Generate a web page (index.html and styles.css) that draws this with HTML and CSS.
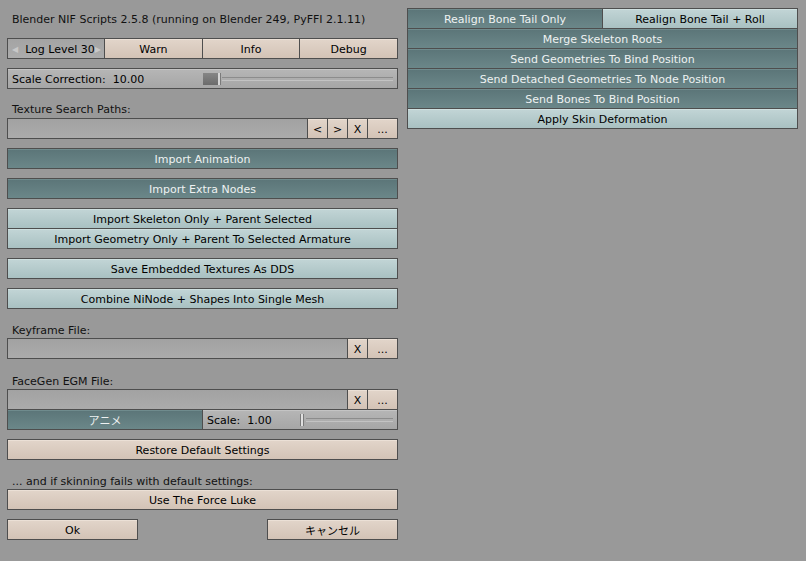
FILE: index.html
```html
<!DOCTYPE html>
<html>
<head>
<meta charset="utf-8">
<link rel="stylesheet" href="styles.css">
</head>
<body>
<div class="page">
  <div class="col left">
    <div class="label title">Blender NIF Scripts 2.5.8 (running on Blender 249, PyFFI 2.1.11)</div>
    <div class="row m12">
      <div class="btn field num"><span class="arr">&#9664;</span><span class="numtext">Log Level 30</span><span class="arr">&#9654;</span></div>
      <div class="btn beige">Warn</div>
      <div class="btn beige">Info</div>
      <div class="btn beige">Debug</div>
    </div>
    <div class="row m9">
      <div class="btn slider">
        <span class="stext">Scale Correction:&nbsp;&nbsp;10.00</span>
        <span class="knob big"></span>
        <span class="track"></span>
      </div>
    </div>
    <div class="label m13">Texture Search Paths:</div>
    <div class="row m2">
      <div class="btn field grow"></div>
      <div class="btn beige sq">&lt;</div>
      <div class="btn beige sq">&gt;</div>
      <div class="btn beige sq">X</div>
      <div class="btn beige dots">...</div>
    </div>
    <div class="row m9"><div class="btn dark grow">Import Animation</div></div>
    <div class="row m9"><div class="btn dark grow">Import Extra Nodes</div></div>
    <div class="row m9"><div class="btn light grow">Import Skeleton Only + Parent Selected</div></div>
    <div class="row mneg"><div class="btn light grow">Import Geometry Only + Parent To Selected Armature</div></div>
    <div class="row m9"><div class="btn light grow">Save Embedded Textures As DDS</div></div>
    <div class="row m9"><div class="btn light grow">Combine NiNode + Shapes Into Single Mesh</div></div>
    <div class="label m14">Keyframe File:</div>
    <div class="row m1">
      <div class="btn field grow"></div>
      <div class="btn beige sq">X</div>
      <div class="btn beige dots">...</div>
    </div>
    <div class="label m15">FaceGen EGM File:</div>
    <div class="row m1">
      <div class="btn field grow"></div>
      <div class="btn beige sq">X</div>
      <div class="btn beige dots">...</div>
    </div>
    <div class="row mneg">
      <div class="btn dark half jp">アニメ</div>
      <div class="btn slider half2">
        <span class="stext">Scale:&nbsp;&nbsp;1.00</span>
        <span class="knob thin"></span>
        <span class="track"></span>
      </div>
    </div>
    <div class="row m9"><div class="btn beige grow">Restore Default Settings</div></div>
    <div class="label m14">... and if skinning fails with default settings:</div>
    <div class="row m1"><div class="btn beige grow">Use The Force Luke</div></div>
    <div class="row m9 split">
      <div class="btn beige okc">Ok</div>
      <div class="btn beige okc jp">キャンセル</div>
    </div>
  </div>
  <div class="col right">
    <div class="row">
      <div class="btn dark grow">Realign Bone Tail Only</div>
      <div class="btn light grow">Realign Bone Tail + Roll</div>
    </div>
    <div class="row mneg"><div class="btn dark grow">Merge Skeleton Roots</div></div>
    <div class="row mneg"><div class="btn dark grow">Send Geometries To Bind Position</div></div>
    <div class="row mneg"><div class="btn dark grow">Send Detached Geometries To Node Position</div></div>
    <div class="row mneg"><div class="btn dark grow">Send Bones To Bind Position</div></div>
    <div class="row mneg"><div class="btn light grow">Apply Skin Deformation</div></div>
  </div>
</div>
</body>
</html>
```
FILE: styles.css
```css
html, body {
  margin: 0;
  padding: 0;
  background: #999999;
}
body {
  font-family: "DejaVu Sans", sans-serif;
  font-size: 11px;
  color: #000;
  width: 806px;
  height: 561px;
  overflow: hidden;
}
.page {
  display: flex;
  padding-left: 7px;
  gap: 9px;
}
.col {
  display: flex;
  flex-direction: column;
  width: 391px;
}
.right {
  padding-top: 8px;
}
.label {
  height: 14px;
  line-height: 16px;
  padding-left: 5px;
  color: #111;
  white-space: nowrap;
}
.title { margin-top: 12px; }
.row {
  display: flex;
  height: 21px;
}
.m1 { margin-top: 1px; }
.m2 { margin-top: 2px; }
.m9 { margin-top: 9px; }
.m12 { margin-top: 12px; }
.m13 { margin-top: 13px; }
.m14 { margin-top: 14px; }
.m15 { margin-top: 15px; }
.mneg { margin-top: -1px; }
.btn {
  box-sizing: border-box;
  height: 21px;
  border: 1px solid #4e4e4e;
  display: flex;
  align-items: center;
  justify-content: center;
  white-space: nowrap;
  padding-top: 1px;
}
.row .btn + .btn { margin-left: -1px; }
.grow { flex: 1 1 0; }
.dark {
  background: linear-gradient(#5b7578, #6b8789);
  color: #eef2f2;
  box-shadow: inset 0 1px 0 #6f8b8d;
}
.light {
  background: linear-gradient(#c2d5d6, #a9c1c2);
  box-shadow: inset 0 1px 0 #cfe0e0;
}
.beige {
  background: linear-gradient(#e2d5ca, #d3c3b6);
  box-shadow: inset 0 1px 0 #ebe0d6;
}
.field {
  background: linear-gradient(#a2a2a2, #ababab);
}
.num {
  flex: 0 0 98px;
  justify-content: space-between;
  padding: 1px 3px 0 4px;
  background: linear-gradient(#a4a4a4, #acacac);
}
.num .arr {
  color: #c8c8c8;
  font-size: 8px;
}
.num .numtext { flex: 1; padding-left: 7px; }
.row .btn.beige:not(.grow):not(.sq):not(.dots):not(.okc) { flex: 1 1 0; }
.sq { flex: 0 0 21px; }
.dots { flex: 0 0 31px; }
.slider {
  flex: 1 1 0;
  justify-content: flex-start;
  background: linear-gradient(#b6b6b6, #a6a6a6);
  box-shadow: inset 0 1px 0 #c4c4c4;
  padding-left: 4px;
}
.stext { width: 191px; flex: 0 0 auto; }
.knob {
  flex: 0 0 auto;
  height: 12px;
  margin-top: -1px;
}
.knob.big {
  width: 15px;
  background: linear-gradient(#868686, #6b6b6b);
  border-right: 2px solid #d6d6d6;
  box-shadow: 1px 0 0 #7a7a7a;
}
.track {
  flex: 1;
  height: 4px;
  margin: -1px 4px 0 2px;
  border-top: 1px solid #8c8c8c;
  border-bottom: 1px solid #c3c3c3;
  box-sizing: border-box;
}
.half { flex: 0 0 196px; }
.half2 { flex: 1 1 0; padding-left: 4px; }
.half2 .stext { width: 93px; }
.knob.thin {
  width: 2px;
  background: #e0e0e0;
  border-left: 1px solid #7a7a7a;
  border-right: 1px solid #7a7a7a;
}
.split { justify-content: space-between; }
.okc { flex: 0 0 131px; }
.row.split .btn + .btn { margin-left: 0; }
.jp { font-family: "DejaVu Sans", "Noto Sans CJK JP", sans-serif; }
```
